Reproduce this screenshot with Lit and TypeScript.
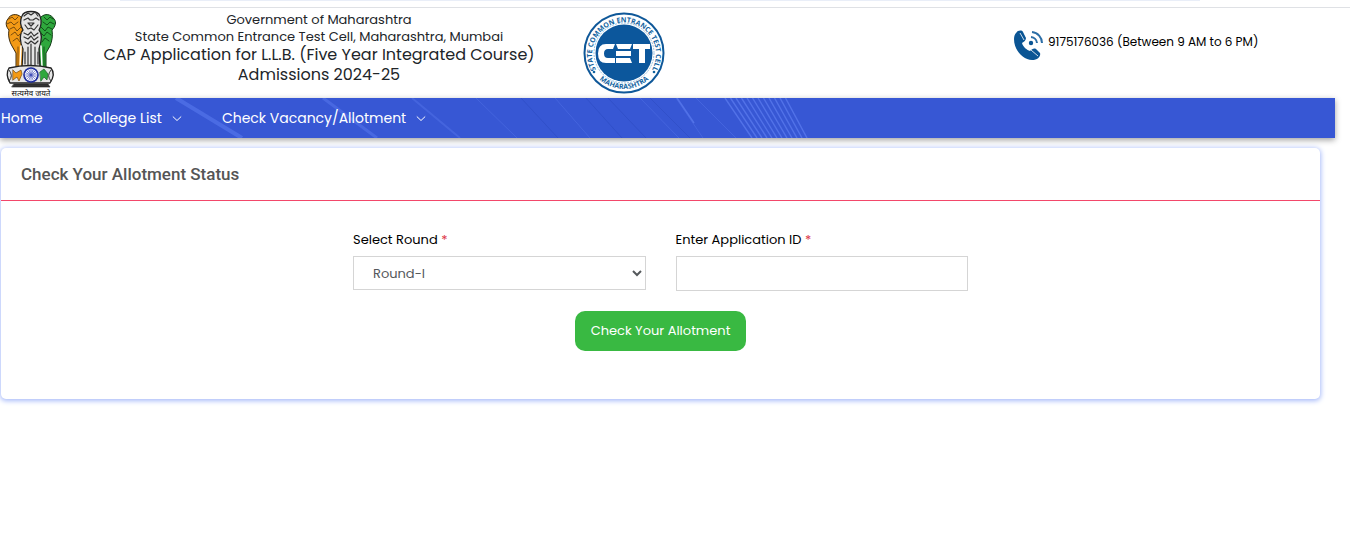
import { LitElement, html, css, svg } from "lit";
import { customElement, property } from "lit/decorators.js";

@customElement("state-emblem")
class StateEmblem extends LitElement {
  static styles = css`
    :host { display: block; }
    svg { display: block; }
    .motto { font: 400 8px "Noto Sans Devanagari", "Noto Sans", "DejaVu Sans", sans-serif; fill: #111; }
  `;
  render() {
    return html`<svg width="60" height="88" viewBox="0 0 60 88" role="img" aria-label="State Emblem of India">
      <g stroke-linejoin="round" stroke-linecap="round">
        <path d="M21 7 C17 3 10 4 8 9 C5 12 6 17 9 20 C8 25 9 31 12 36 L16 43 L16 57 L12 59 L24 59 L25 22 Z" fill="#f39a16" stroke="#3d2a0c" stroke-width="1"/>
        <path d="M41 7 C45 3 51 4 54 9 C57 12 55 17 52 20 C53 26 52 31 50 36 L46 43 L46 57 L49 59 L38 59 L37 22 Z" fill="#2fa83d" stroke="#123b17" stroke-width="1"/>
        <path d="M22 6 C24 0 38 0 40 6 C42 11 41 17 39 20 C43 24 41 33 39 39 L40 58 L22 58 L23 39 C20 33 19 24 23 20 C20 15 20 10 22 6Z" fill="#e4e4e4" stroke="#222" stroke-width="1.3"/>
        <path d="M24 6 L28 3 L31 5 L35 2 L38 6 M24 10 L28 8 L30 10 L33 10 L36 8 L39 10 M28 13 H34 L31 16Z M25 15 L28 19 L31 18 L34 20 L38 15 M24 23 L28 25 L31 22 L34 26 L38 23 M24 27 L28 29 L31 26 L34 30 L38 27 M25 32 L28 34 L31 31 L35 34 L38 31 M28 37 V57 M31 34 V57 M35 37 V57 M25 42 V54 M38 42 V54" fill="none" stroke="#333" stroke-width="1.2"/>
        <path d="M9 9 L12 7 L15 10 L18 7 M7 14 L11 12 L14 15 L18 12 M10 19 L14 17 L17 21 L21 17 M11 25 L15 22 L18 26 L22 22 M13 31 L17 28 L20 32 M18 37 V56" fill="none" stroke="#7a4c0c" stroke-width="1"/>
        <path d="M21 36 L20 57 M41 36 L42 57" stroke="#fff" stroke-width="1.5"/>
        <path d="M53 9 L50 7 L47 10 L44 7 M54 14 L50 12 L47 15 L43 12 M52 19 L48 17 L45 21 L41 17 M51 25 L47 22 L44 26 L40 22 M49 31 L45 28 L42 32 M44 37 V56" fill="none" stroke="#125019" stroke-width="1"/>
        <path d="M9 58 Q30 53 51 58 Q56 64 50 73 H10 Q5 64 9 58Z" fill="#e6e6e6" stroke="#222" stroke-width="1.3"/>
        <path d="M13 60 L16 63 L21 60 L22 64 L19 71 L17 67 L13 70Z" fill="#f39a16" stroke="#7a4b0b" stroke-width=".7"/>
        <path d="M40 62 L44 59 L48 64 L47 70 L44 67 L41 71Z" fill="#2fa83d" stroke="#176125" stroke-width=".7"/>
        <path d="M9 60 Q14 66 9 71 M51 60 Q46 66 51 71" fill="none" stroke="#333"/>
        <circle cx="31" cy="65" r="7" fill="#fff" stroke="#1b2a9b" stroke-width="1.6"/>
        <path d="M31 58 V72 M24 65 H38 M26 60 L36 70 M36 60 L26 70 M28.3 58.5 L33.7 71.5 M33.7 58.5 L28.3 71.5 M24.5 62.3 L37.5 67.7 M37.5 62.3 L24.5 67.7" stroke="#3a48b5" stroke-width=".6"/>
        <path d="M14 74 H48 L50 77 H12Z" fill="#333" stroke="#222" stroke-width=".6"/>
      </g>
      <text class="motto" x="31" y="86" text-anchor="middle">सत्यमेव जयते</text>
    </svg>`;
  }
}

@customElement("cet-seal")
class CetSeal extends LitElement {
  static styles = css`
    :host { display: block; }
    svg { display: block; }
    .ring { font: 700 7px "Open Sans", sans-serif; fill: #12639f; }
  `;
  render() {
    return html`<svg width="82" height="82" viewBox="0 0 82 82" role="img" aria-label="State Common Entrance Test Cell">
      <defs>
        <path id="upper" d="M15 61 A32 32 0 1 1 67 61"/>
        <path id="lower" d="M9 58 A36.500 36.500 0 0 0 73 58"/>
      </defs>
      <circle cx="41" cy="41" r="39.5" fill="#fff" stroke="#0f5899" stroke-width="2"/>
      <circle cx="41" cy="41" r="30" fill="none" stroke="#7db0d8" stroke-width=".8" stroke-dasharray="2 1"/>
      <circle cx="41" cy="41" r="28.5" fill="#0c579c"/>
      <text class="ring"><textPath href="#upper" startOffset="50%" text-anchor="middle">STATE COMMON ENTRANCE TEST CELL</textPath></text>
      <text class="ring"><textPath href="#lower" startOffset="50%" text-anchor="middle">MAHARASHTRA</textPath></text>
      <circle cx="11" cy="60" r="1.3" fill="#12639f"/><circle cx="71" cy="60" r="1.3" fill="#12639f"/>
      <path d="M32 32 H23 Q15 32 15 41.500 Q15 51 23 51 H32 V46 H25 Q21 46 21 41.500 Q21 37 25 37 H30Z" fill="#fff"/>
      <path d="M33 32 H49 L47 37 H35Z M33 39 H48 V44 H33Z M33 46 H47 L49 51 H33Z" fill="#fff"/>
      <path d="M50 32 H67 V37 H62 V51 H56 V37 H50Z" fill="#fff"/>
    </svg>`;
  }
}

const phoneIcon = svg`
  <path d="M3 3 C5 0 9 0 10 2 L13 8 C13 10 11 12 9 13 C10 17 14 20 17 21 C19 19 21 18 23 19 L27 23 C28 26 25 30 19 30 C10 30 1 20 1 9 C1 6 2 4 3 3Z" fill="#0b5594"/>
  <path d="M7 3 L11 10 M18 20 L25 26" stroke="#fff" stroke-width=".8"/>
  <circle cx="18" cy="13" r="2.200" fill="#0b5594"/>
  <path d="M18 7 A6.500 6.500 0 0 1 24 13 M19 2 A11 11 0 0 1 29 13" fill="none" stroke="#2c6ea6" stroke-width="2"/>`;

@customElement("nav-bar")
class NavBar extends LitElement {
  static styles = css`
    :host { display: block; }
    .bar {
      position: relative; height: 40px; margin-right: 15px;
      background: #3757d4; box-shadow: 0 2px 6px rgba(0, 0, 0, .38);
    }
    .streaks { position: absolute; inset: 0 auto auto 0; max-width: 100%; }
    .menu {
      position: relative; display: flex; gap: 40px; align-items: center;
      height: 40px; margin: 0; padding: 0 0 0 1px; list-style: none;
    }
    .link {
      display: flex; align-items: center; gap: 10px; color: #fff; text-decoration: none;
      font: 400 14px/20px Poppins, Inter, sans-serif; white-space: nowrap;
    }
  `;
  private items = [
    { label: "Home", sub: false },
    { label: "College List", sub: true },
    { label: "Check Vacancy/Allotment", sub: true },
  ];
  render() {
    const rays = Array.from({ length: 12 }, (_, i) => svg`<path d="M${725 + i * 5.5} 0 L${752 + i * 5} 40"/>`);
    return html`<nav class="bar">
      <svg class="streaks" width="810" height="40" viewBox="0 0 810 40" aria-hidden="true">
        <g fill="none" stroke="#5272e8" stroke-width="1.4">${rays}
          <path d="M176 0 L242 40" stroke-width="4" opacity=".75"/>
          <path d="M323 0 L377 40" stroke-width="3" opacity=".65"/>
          <path d="M412 0 L460 40" stroke-width="2" opacity=".5"/>
          <path d="M476 0 L517 40 M555 0 L590 40 M640 0 L679 40 M676 0 L703 40 M696 0 L736 40" stroke-width="1" opacity=".5"/>
          <path d="M677 0 L694 25" stroke-width="1.5"/>
        </g>
        <path d="M521 0 L558 40 M586 0 L622 40 M608 0 L646 40 M650 0 L690 40" fill="none" stroke="#2947b8" opacity=".4"/>
      </svg>
      <ul class="menu">${this.items.map((it) => html`<li><a class="link" href="#">${it.label}${it.sub
        ? html`<svg width="10" height="10" viewBox="0 0 10 10" aria-hidden="true"><path d="M.8 3.500 L5 7.500 L9.200 3.500" fill="none" stroke="#fff" stroke-width="1"/></svg>`
        : ""}</a></li>`)}</ul>
    </nav>`;
  }
}

@customElement("app-root")
class AppRoot extends LitElement {
  @property() heading = "Check Your Allotment Status";
  static styles = css`
    :host { display: flow-root; min-height: 100vh; background: #fff; font-family: Poppins, Inter, sans-serif; color: #212529; }
    .chrome { height: 7px; border-bottom: 1px solid #dfe1e5; padding: 0 150px 0 120px; }
    .tab { height: 1px; background: #e9eef8; }
    .header { display: grid; grid-template-columns: 90px 458px 430px 1fr; height: 90px; align-items: start; }
    .emblem { padding: 2px 0 0 0; }
    .titles { text-align: center; padding-top: 3px; }
    .small { margin: 0; font-size: 13px; line-height: 17px; }
    .large { margin: 0; font-size: 16px; line-height: 20px; font-weight: 400; }
    .seal { padding: 4px 0 0 35px; }
    .phone { display: flex; align-items: center; gap: 5px; padding: 22px 0 0 35px; font-size: 12px; color: #000; white-space: nowrap; }
    .phone span { padding-bottom: 8px; }
    .card {
      margin: 10px 30px 0 1px; border-radius: 5px; background: #fff;
      box-shadow: 0 1px 5px 1px #a9bcfa; position: relative; padding-bottom: 48px;
    }
    .title { margin: 0; padding: 14px 20px; border-bottom: 1px solid #f3476a; font: 500 17px/24px Roboto, sans-serif; color: #555; }
    .form { display: grid; grid-template-columns: 1fr 1fr; gap: 20px 30px; width: 615px; max-width: 90%; margin: 0 auto; padding-top: 29px; }
    .field { display: flex; flex-direction: column; gap: 6px; min-width: 0; }
    .label { font-size: 13px; line-height: 20px; color: #000; }
    .star { color: #dc3545; }
    .control {
      box-sizing: border-box; width: 100%; height: 34px; border: 1px solid #d5d5d5; border-radius: 0;
      background: #fff; color: #55595c; font: 400 13px/20px Poppins, Inter, sans-serif; padding: 0 0 0 15px;
    }
    .text { height: 35px; }
    .submit {
      grid-column: 1 / -1; justify-self: center; height: 40px; border: 0; border-radius: 10px; padding: 0 16px;
      background: #39b942; color: #fff; font: 400 13px/20px Poppins, Inter, sans-serif; white-space: nowrap;
    }
  `;
  render() {
    return html`
      <div class="chrome"><div class="tab"></div></div>
      <header class="header">
        <state-emblem class="emblem"></state-emblem>
        <div class="titles">
          <p class="small">Government of Maharashtra</p>
          <p class="small">State Common Entrance Test Cell, Maharashtra, Mumbai</p>
          <h1 class="large">CAP Application for L.L.B. (Five Year Integrated Course)<br>Admissions 2024-25</h1>
        </div>
        <cet-seal class="seal"></cet-seal>
        <div class="phone">
          <svg width="30" height="31" viewBox="0 0 30 31" aria-hidden="true">${phoneIcon}</svg>
          <span>9175176036 (Between 9 AM to 6 PM)</span>
        </div>
      </header>
      <nav-bar></nav-bar>
      <main class="card">
        <h2 class="title">${this.heading}</h2>
        <form class="form" @submit=${(e: Event) => e.preventDefault()}>
          <div class="field">
            <label class="label" for="round">Select Round <span class="star">*</span></label>
            <select class="control" id="round"><option>Round-I</option></select>
          </div>
          <div class="field">
            <label class="label" for="appid">Enter Application ID <span class="star">*</span></label>
            <input class="control text" id="appid" type="text">
          </div>
          <button class="submit" type="submit">Check Your Allotment</button>
        </form>
      </main>`;
  }
}
